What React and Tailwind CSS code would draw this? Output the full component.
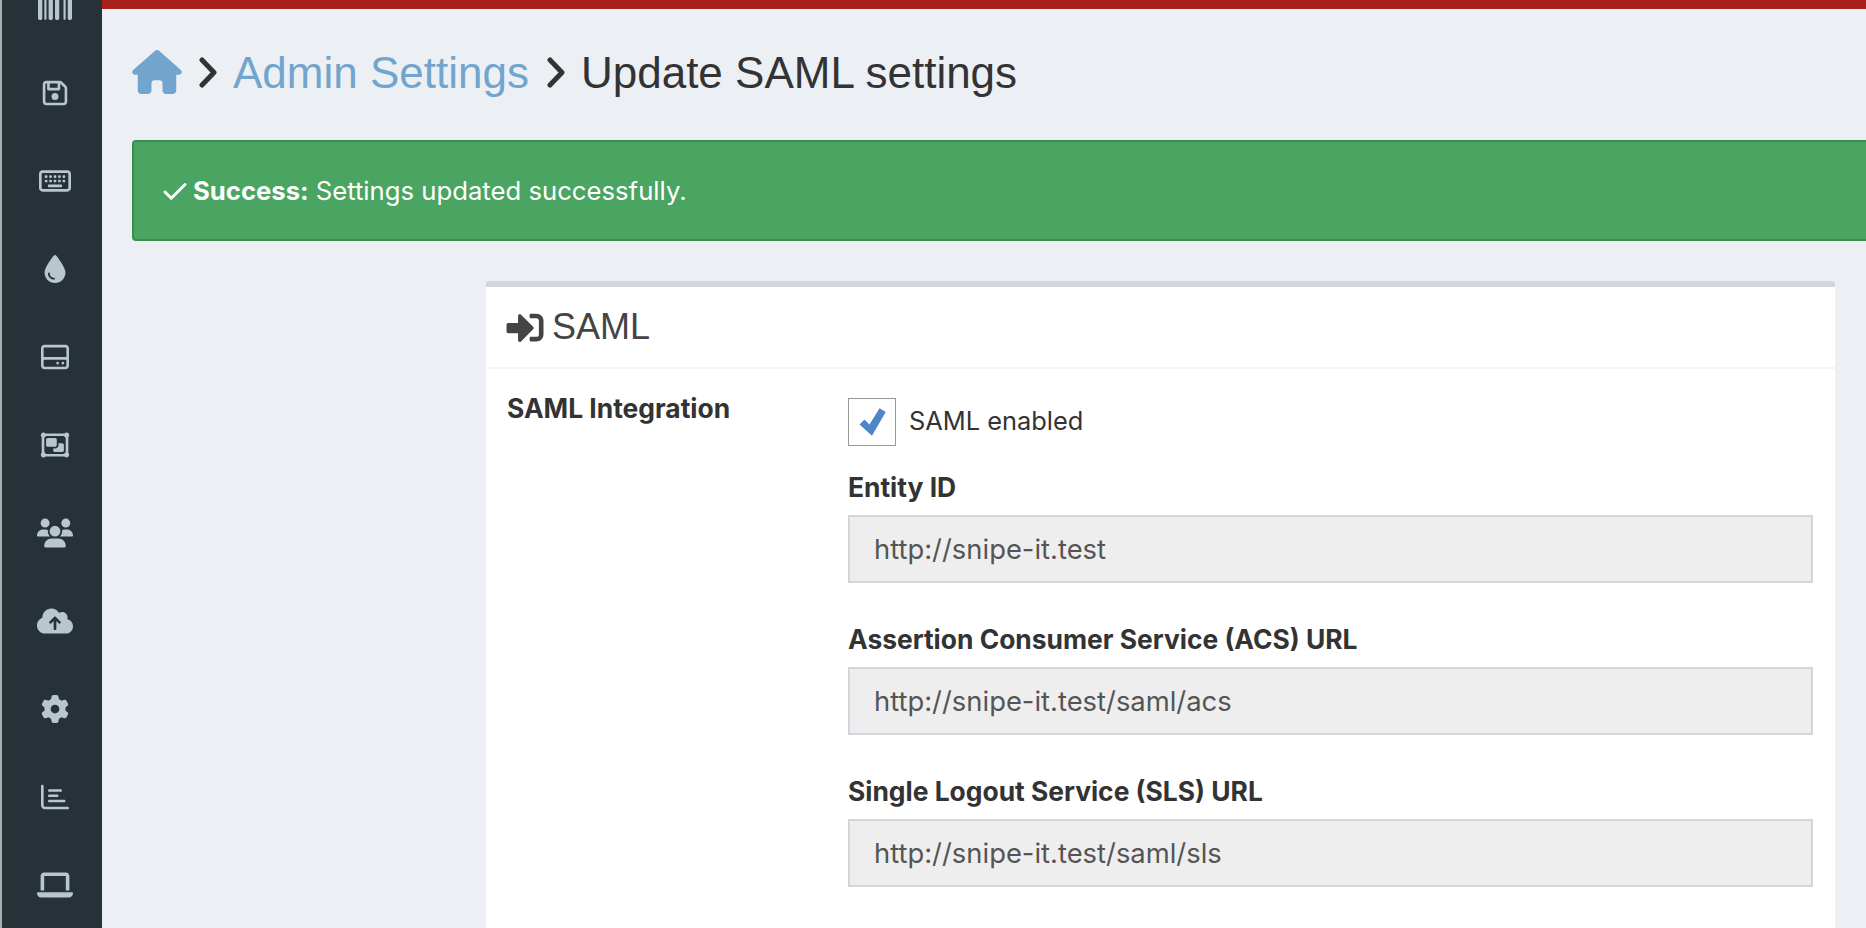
import { FaBarcode, FaRegFloppyDisk, FaRegKeyboard, FaDroplet, FaRegHardDrive, FaRegObjectGroup, FaUsers, FaCloudArrowUp, FaGear, FaRegChartBar, FaLaptop, FaHouse } from 'react-icons/fa6';
import { FaSignInAlt } from 'react-icons/fa';
import { Check } from 'lucide-react';

const navIcons = [
  [FaBarcode, 'h-[34px] w-[34px]'],
  [FaRegFloppyDisk, 'h-[28px] w-[28px]'],
  [FaRegKeyboard, 'h-[32px] w-[32px]'],
  [FaDroplet, 'h-[28px] w-[28px]'],
  [FaRegHardDrive, 'h-[28px] w-[28px]'],
  [FaRegObjectGroup, 'h-[32px] w-[32px]'],
  [FaUsers, 'h-[32px] w-[36px]'],
  [FaCloudArrowUp, 'h-[30px] w-[36px]'],
  [FaGear, 'h-[28px] w-[28px]'],
  [FaRegChartBar, 'h-[28px] w-[28px]'],
  [FaLaptop, 'h-[32px] w-[36px]'],
];

const fields = [
  ['Entity ID', 'http://snipe-it.test'],
  ['Assertion Consumer Service (ACS) URL', 'http://snipe-it.test/saml/acs'],
  ['Single Logout Service (SLS) URL', 'http://snipe-it.test/saml/sls'],
];

function Chevron({ className }) {
  return (
    <svg viewBox="0 0 20 31" className={`h-[31px] w-[20px] mt-[16px] text-[#333] ${className}`} fill="none" stroke="currentColor" strokeWidth="5" strokeLinecap="round" strokeLinejoin="round">
      <polyline points="4,3 16,15.5 4,28" />
    </svg>
  );
}

function Sidebar() {
  return (
    <aside className="w-[102px] shrink-0 border-l-2 border-[#a9adb0] bg-[#263238] text-[#b8c7ce] -mt-[39px] pl-[6px] flex flex-col items-center">
      {navIcons.map(([Icon, size], i) => (
        <div key={i} className="h-[88px] shrink-0 flex items-center justify-center">
          <Icon className={size} />
        </div>
      ))}
    </aside>
  );
}

export default function App() {
  return (
    <div className="h-[928px] w-[1866px] overflow-hidden flex bg-[#ecf0f5] font-['Inter',sans-serif] text-[#333]">
      <Sidebar />
      <main className="flex-1 min-w-0 flex flex-col">
        <div className="h-[9px] bg-[#a82119]" />
        <div className="pl-[30px] pt-[32px] h-[131px] flex items-start font-['Liberation_Sans',sans-serif] text-[44px] leading-[64px]">
          <FaHouse className="h-[44px] w-[50px] mt-[9px] text-[#72a5cd]" />
          <Chevron className="ml-[16px] mr-[15px]" />
          <span className="text-[#72a5cd]">Admin Settings</span>
          <Chevron className="ml-[17px] mr-[15px]" />
          <span>Update SAML settings</span>
        </div>

        <div className="ml-[30px] h-[101px] shrink-0 rounded-l-[4px] border-y-2 border-l-2 border-[#3d8b50] bg-[#4ba562] text-white flex items-center pl-[26px] pt-[2px] text-[25.7px]">
          <Check className="h-[30px] w-[30px] mr-[3px]" strokeWidth={2.4} />
          <strong className="font-bold mr-[7px]">Success:</strong>
          Settings updated successfully.
        </div>

        <section className="flex-1 ml-[384px] mr-[31px] mt-[40px] bg-white border-t-[6px] border-[#d2d6dc] rounded-t-[3px]">
          <header className="h-[82px] border-b-2 border-[#f4f4f4] flex items-center pl-[20px] gap-[8px] text-[#444] text-[36px]">
            <FaSignInAlt className="h-[37px] w-[38px]" />
            <span className="font-['Liberation_Sans',sans-serif]">SAML</span>
          </header>
          <div className="flex pt-[22px] pl-[21px] pr-[22px]">
            <div className="w-[341px] shrink-0 font-bold text-[26.4px] leading-[34px]">SAML Integration</div>
            <div className="flex-1 min-w-0 pt-[7px]">
              <label className="flex items-center gap-[13px] text-[25.4px] text-[#333]">
                <span className="h-[48px] w-[48px] border border-[#999] flex items-center justify-center">
                  <svg viewBox="0 0 24 24" className="h-[30px] w-[30px] text-[#4c86c6]" fill="currentColor">
                    <path d="M2 14l4-4 4 4L18 1l5 3-11 19z" />
                  </svg>
                </span>
                <span className="-mt-[2px]">SAML enabled</span>
              </label>
              <div className="mt-[26px] flex flex-col gap-[41px]">
                {fields.map(([label, value]) => (
                  <div key={label}>
                    <div className="font-bold text-[26.4px] leading-[30px] mb-[13px]">{label}</div>
                    <div className="h-[68px] border-2 border-[#d2d6dc] bg-[#eee] text-[#555] text-[27.4px] flex items-center pl-[24px] pt-[2px]">{value}</div>
                  </div>
                ))}
              </div>
            </div>
          </div>
        </section>
      </main>
    </div>
  );
}
